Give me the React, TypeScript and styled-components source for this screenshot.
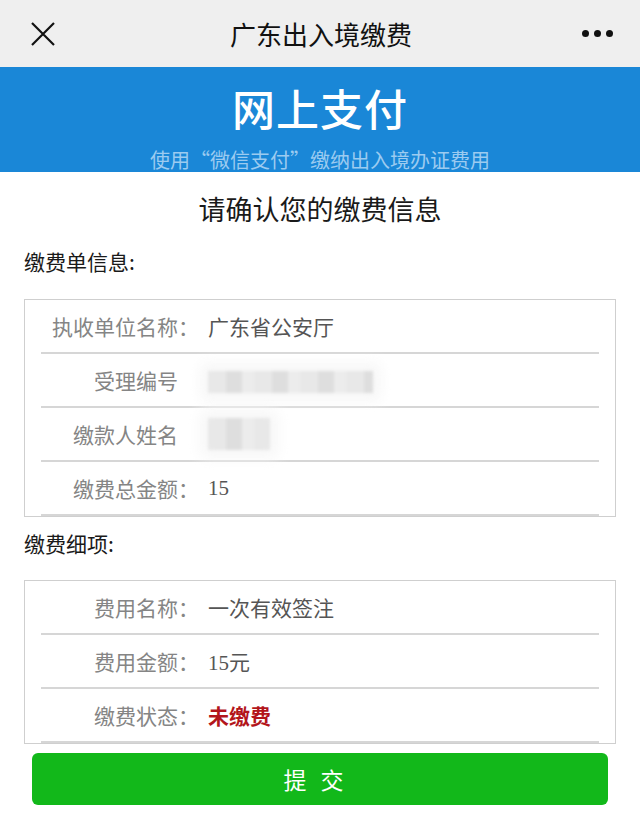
import React from 'react'
import styled, {createGlobalStyle} from 'styled-components'

const GlobalStyle = createGlobalStyle`
  body {
    margin: 0;
    background: #fff;
    font-family: "Noto Sans CJK SC", "Noto Sans", sans-serif;
  }
`

const Page = styled.div`
  width: 640px;
  min-height: 821px;
  background: #fff;
`

const NavBar = styled.header`
  height: 67px;
  background: #efefef;
  display: flex;
  align-items: center;
  justify-content: space-between;
  padding: 0 27px 0 30px;
  box-sizing: border-box;
`

const NavTitle = styled.h1`
  margin: 0 0 0 4px;
  font-size: 26px;
  font-weight: 400;
  color: #111;
`

const Dots = styled.div`
  display: flex;
  gap: 5px;
  span {
    width: 7px;
    height: 7px;
    border-radius: 50%;
    background: #111;
  }
`

const Banner = styled.section`
  height: 105px;
  background: #1a87d7;
  text-align: center;
  overflow: hidden;
  padding-top: 14px;
  box-sizing: border-box;
`

const BannerTitle = styled.div`
  font-size: 43px;
  line-height: 52px;
  font-weight: 500;
  color: #fff;
  letter-spacing: 1px;
`

const BannerSub = styled.div`
  margin-top: 13px;
  font-size: 20px;
  line-height: 28px;
  color: #9ccbf0;
`

const Content = styled.main`
  padding: 0 24px;
`

const Heading = styled.h2`
  margin: 19px 0 0;
  font-size: 27px;
  line-height: 36px;
  font-weight: 400;
  color: #1a1a1a;
  text-align: center;
`

const SectionTitle = styled.div<{$top: number}>`
  margin-top: ${p => p.$top}px;
  font-size: 21px;
  line-height: 28px;
  color: #1a1a1a;
`

const InfoBox = styled.div<{$top: number}>`
  margin-top: ${p => p.$top}px;
  border: 1px solid #cfcfcf;
`

const Row = styled.div`
  height: 52px;
  margin: 0 16px;
  border-bottom: 2px solid #d6d6d6;
  display: flex;
  align-items: center;
  gap: 9px;
  font-size: 21px;
`

const Label = styled.span`
  width: 158px;
  flex-shrink: 0;
  text-align: right;
  color: #858585;
`

const Colon = styled.span<{$hidden?: boolean}>`
  visibility: ${p => (p.$hidden ? 'hidden' : 'visible')};
`

const Value = styled.span<{$alert?: boolean}>`
  font-family: "Liberation Serif", "Noto Sans CJK SC", serif;
  color: ${p => (p.$alert ? '#b3151b' : '#555')};
  font-weight: ${p => (p.$alert ? 700 : 400)};
`

const Smudge = styled.span<{$w: number; $h: number}>`
  display: inline-block;
  vertical-align: middle;
  width: ${p => p.$w}px;
  height: ${p => p.$h}px;
  background: repeating-linear-gradient(
    90deg,
    #e8e8e8 0 18px,
    #dedede 18px 34px,
    #ececec 34px 46px
  );
  filter: blur(1.5px);
  box-shadow: 0 0 14px 8px #f7f7f7;
`

const SubmitButton = styled.button`
  display: block;
  width: calc(100% - 16px);
  margin: 9px 8px 0;
  height: 52px;
  border: none;
  border-radius: 6px;
  background: #12b81a;
  color: #fff;
  font-family: "Noto Sans CJK SC", sans-serif;
  font-size: 23px;
  letter-spacing: 3px;
  word-spacing: 3px;
  padding: 0 10px 0 0;
`

const CloseIcon = () => (
  <svg width="26" height="26" viewBox="0 0 26 26">
    <path d="M2 2 L24 24 M24 2 L2 24" stroke="#111" strokeWidth="2.2" fill="none" />
  </svg>
)

interface Item {
  label: string
  colon?: boolean
  value: React.ReactNode
  alert?: boolean
}

const billItems: Item[] = [
  {label: '执收单位名称', colon: true, value: '广东省公安厅'},
  {label: '受理编号', value: <Smudge $w={165} $h={22} />},
  {label: '缴款人姓名', value: <Smudge $w={62} $h={32} />},
  {label: '缴费总金额', colon: true, value: '15'},
]

const detailItems: Item[] = [
  {label: '费用名称', colon: true, value: '一次有效签注'},
  {label: '费用金额', colon: true, value: '15元'},
  {label: '缴费状态', colon: true, value: '未缴费', alert: true},
]

const InfoRows = ({items}: {items: Item[]}) => (
  <>
    {items.map(item => (
      <Row key={item.label}>
        <Label>
          {item.label}
          <Colon $hidden={!item.colon}>：</Colon>
        </Label>
        <Value $alert={item.alert}>{item.value}</Value>
      </Row>
    ))}
  </>
)

export default function App() {
  return (
    <Page>
      <GlobalStyle />
      <NavBar>
        <CloseIcon />
        <NavTitle>广东出入境缴费</NavTitle>
        <Dots>
          <span />
          <span />
          <span />
        </Dots>
      </NavBar>
      <Banner>
        <BannerTitle>网上支付</BannerTitle>
        <BannerSub>使用“微信支付”缴纳出入境办证费用</BannerSub>
      </Banner>
      <Content>
        <Heading>请确认您的缴费信息</Heading>
        <SectionTitle $top={20}>缴费单信息:</SectionTitle>
        <InfoBox $top={24}>
          <InfoRows items={billItems} />
        </InfoBox>
        <SectionTitle $top={12}>缴费细项:</SectionTitle>
        <InfoBox $top={23}>
          <InfoRows items={detailItems} />
        </InfoBox>
        <SubmitButton>提 交</SubmitButton>
      </Content>
    </Page>
  )
}
